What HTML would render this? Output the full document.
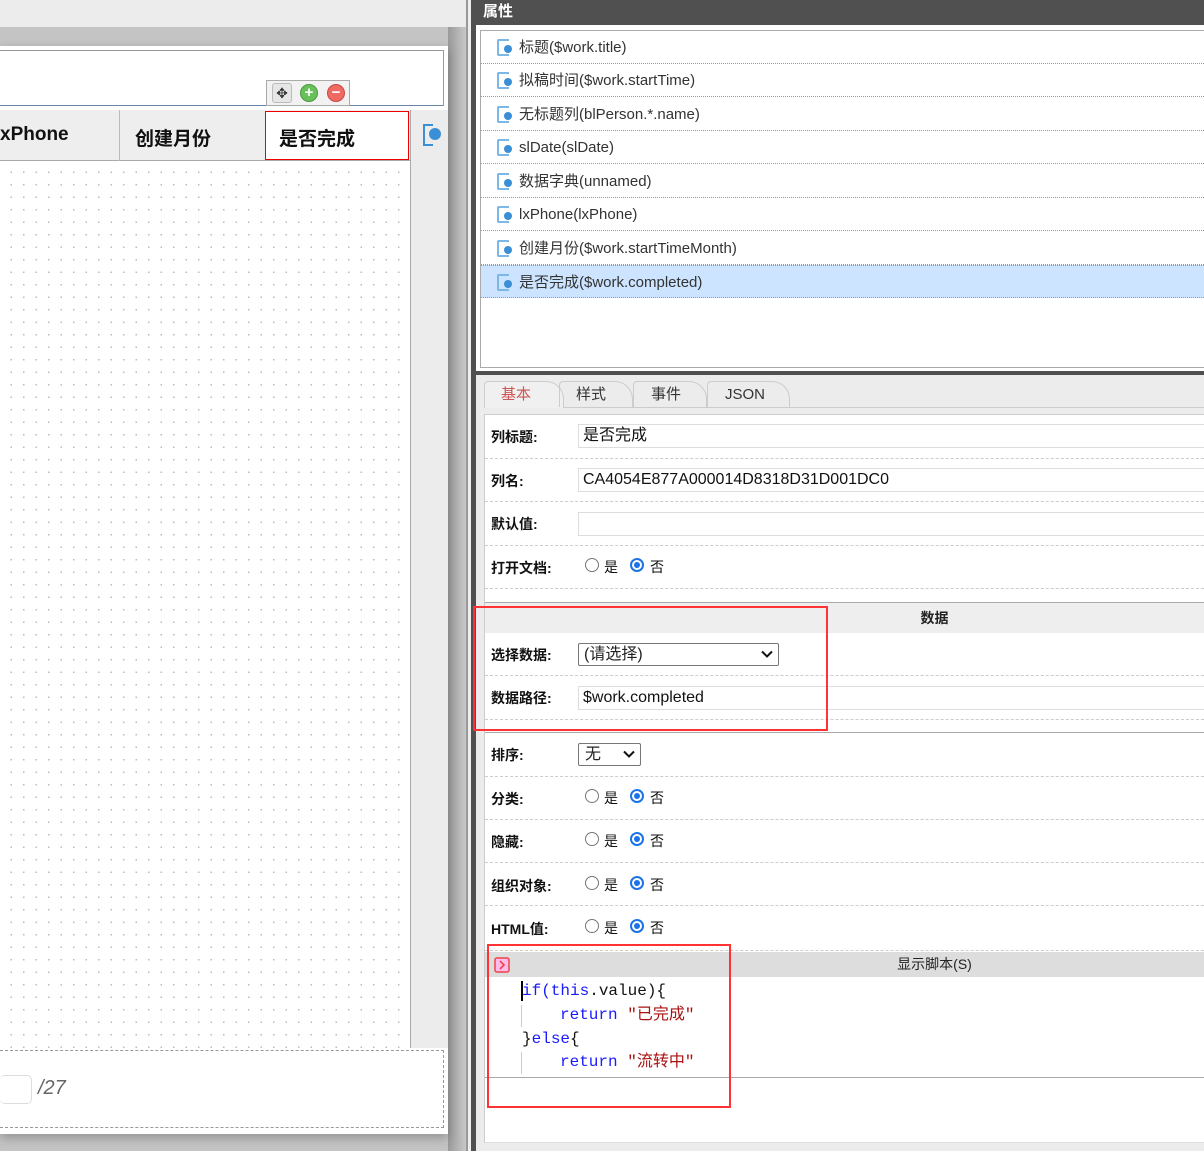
<!DOCTYPE html>
<html><head><meta charset="utf-8"><style>
*{margin:0;padding:0;box-sizing:border-box}
body{width:1204px;height:1151px;position:relative;overflow:hidden;background:#ececec;font-family:"Liberation Sans","Noto Sans CJK SC",sans-serif;font-size:15px;color:#222}
.a{position:absolute}
.lbl{position:absolute;left:491px;font-weight:bold;font-size:14px;color:#111}
.dash{position:absolute;left:485px;right:0;border-top:1px dashed #ccc}
.inp{position:absolute;left:578px;right:0;height:24px;border:1px solid #ddd;border-right:none;padding-left:4px;font-size:16px;line-height:22px;color:#111}
.rad{position:absolute;width:14px;height:14px;border-radius:50%;border:1px solid #777;background:#fff}
.rad.on{border:2px solid #1a73e8}
.rad.on::after{content:"";position:absolute;left:2px;top:2px;width:6px;height:6px;border-radius:50%;background:#1a73e8}
.rt{position:absolute;font-size:14px;color:#111}
.li{position:absolute;left:481px;right:0;height:33px;border-bottom:1px dotted #999;font-size:15px;color:#333;line-height:33px;padding-left:38px}
.ic{position:absolute;left:16px;top:8px;width:12px;height:17px;border:2px solid #7bb8e8;border-right:none;border-radius:2px 0 0 2px}
.ic::after{content:"";position:absolute;left:5px;top:4px;width:8px;height:8px;border-radius:50%;background:#3b8fd6}
.code{position:absolute;font-family:"Liberation Mono","Noto Sans CJK SC",monospace;font-size:16px;line-height:20px;color:#111}
.kw{color:#1a1aff}.st{color:#a11}
.chev{position:absolute;right:5px;top:6px}
</style></head><body>
<!-- left area -->
<div class="a" style="left:0;top:27px;width:466px;height:1124px;background:#c4c4c4"></div>
<div class="a" style="left:448px;top:27px;width:18px;height:1124px;background:linear-gradient(90deg,#9a9a9a,#c8c8c8)"></div>
<div class="a" style="left:0;top:46px;width:448px;height:1088px;background:#fff;box-shadow:0 4px 10px rgba(0,0,0,.25)"></div>
<div class="a" style="left:0;top:50px;width:444px;height:56px;border:1px solid #999;border-left:none;border-bottom:1px solid #6a86a8"></div>
<div class="a" style="left:266px;top:80px;width:84px;height:26px;background:#f2f2f2;border:1px solid #aaa"></div>
<div class="a" style="left:272px;top:83px;width:20px;height:20px;border-radius:3px;background:#e6e6e6;border:1px solid #bbb;text-align:center;line-height:18px;font-size:14px;color:#333">✥</div>
<div class="a" style="left:300px;top:84px;width:18px;height:18px;border-radius:50%;background:#67c05a;border:1px solid #4a9a3e;color:#fff;text-align:center;line-height:15px;font-weight:bold;font-size:15px">+</div>
<div class="a" style="left:327px;top:84px;width:18px;height:18px;border-radius:50%;background:#ef6a63;border:1px solid #c84a44;color:#fff;text-align:center;line-height:15px;font-weight:bold;font-size:15px">−</div>
<div class="a" style="left:0;top:110px;width:447px;height:51px;background:#eee;border-bottom:1px solid #aaa"></div>
<div class="a" style="left:119px;top:110px;width:1px;height:51px;background:#bbb"></div>
<div class="a" style="left:0;top:124px;font-weight:bold;font-size:19px;color:#111">xPhone</div>
<div class="a" style="left:135px;top:124px;font-weight:bold;font-size:19px;color:#111">创建月份</div>
<div class="a" style="left:265px;top:111px;width:144px;height:49px;background:#fff;border:1px solid #e00"></div>
<div class="a" style="left:279px;top:124px;font-weight:bold;font-size:19px;color:#111">是否完成</div>
<div class="a" style="left:410px;top:110px;width:1px;height:938px;background:#aaa"></div>
<div class="a" style="left:411px;top:110px;width:37px;height:938px;background:#ececec"></div>
<div class="a" style="left:423px;top:124px;width:10px;height:22px;border:2px solid #3b8fd6;border-right:none"></div>
<div class="a" style="left:429px;top:128px;width:12px;height:12px;border-radius:50%;background:#3b8fd6"></div>
<div class="a" style="left:0;top:162px;width:409px;height:886px;background-image:radial-gradient(#bbb 0.8px,transparent 1px);background-size:12.5px 12.5px;background-position:5px 4px"></div>
<div class="a" style="left:0;top:1050px;width:444px;height:78px;border:1px dashed #999;border-left:none"></div>
<div class="a" style="left:0;top:1075px;width:32px;height:29px;border:1px solid #ddd;border-radius:5px;border-left:none"></div>
<div class="a" style="left:38px;top:1077px;font-size:20px;font-style:italic;color:#666">/27</div>
<!-- divider -->
<div class="a" style="left:466px;top:0;width:2px;height:1151px;background:#999"></div>
<div class="a" style="left:468px;top:0;width:3px;height:1151px;background:#eee"></div>
<div class="a" style="left:471px;top:0;width:5px;height:1151px;background:#505050"></div>
<!-- right header -->
<div class="a" style="left:471px;top:0;right:0;height:25px;background:#505050"></div>
<div class="a" style="left:483px;top:0;color:#fff;font-weight:bold;font-size:15px">属性</div>
<div class="a" style="left:476px;top:25px;right:0;height:346px;background:#fff"></div>
<div class="a" style="left:480px;top:30px;right:0;height:338px;border:1px solid #aaa;border-right:none"></div>
<div class="li" style="top:31px"><i class="ic"></i>标题($work.title)</div>
<div class="li" style="top:64px"><i class="ic"></i>拟稿时间($work.startTime)</div>
<div class="li" style="top:98px"><i class="ic"></i>无标题列(blPerson.*.name)</div>
<div class="li" style="top:131px"><i class="ic"></i>slDate(slDate)</div>
<div class="li" style="top:165px"><i class="ic"></i>数据字典(unnamed)</div>
<div class="li" style="top:198px"><i class="ic"></i>lxPhone(lxPhone)</div>
<div class="li" style="top:232px"><i class="ic"></i>创建月份($work.startTimeMonth)</div>
<div class="li" style="top:265px;background:#cce4ff;border-top:1px dotted #999"><i class="ic"></i>是否完成($work.completed)</div>
<div class="a" style="left:476px;top:371px;right:0;height:4px;background:#505050"></div>
<!-- tabs -->
<div class="a" style="left:484px;top:407px;right:0;height:1px;background:#ccc"></div>
<div class="a" style="left:484px;top:381px;width:80px;height:27px;background:#f0f0f0;border:1px solid #ccc;border-bottom:none;border-radius:4px 18px 0 0;color:#c55;padding-left:16px;line-height:26px;font-size:15px">基本</div>
<div class="a" style="left:559px;top:381px;width:74px;height:26px;border:1px solid #ccc;border-bottom:none;border-radius:4px 18px 0 0;color:#333;padding-left:16px;line-height:26px">样式</div>
<div class="a" style="left:633px;top:381px;width:74px;height:26px;border:1px solid #ccc;border-bottom:none;border-radius:4px 18px 0 0;color:#333;padding-left:17px;line-height:26px">事件</div>
<div class="a" style="left:707px;top:381px;width:83px;height:26px;border:1px solid #ccc;border-bottom:none;border-radius:4px 18px 0 0;color:#333;padding-left:17px;line-height:26px">JSON</div>
<!-- form -->
<div class="a" style="left:484px;top:414px;right:0;height:729px;background:#fff;border:1px solid #ccc;border-right:none;border-bottom:1px solid #ddd"></div>
<div class="lbl" style="top:427px">列标题:</div><div class="inp" style="top:424px">是否完成</div>
<div class="dash" style="top:458px"></div>
<div class="lbl" style="top:471px">列名:</div><div class="inp" style="top:468px">CA4054E877A000014D8318D31D001DC0</div>
<div class="dash" style="top:501px"></div>
<div class="lbl" style="top:514px">默认值:</div><div class="inp" style="top:512px"></div>
<div class="dash" style="top:545px"></div>
<div class="lbl" style="top:558px">打开文档:</div>
<div class="rad" style="left:585px;top:558px"></div><div class="rt" style="left:604px;top:557px">是</div>
<div class="rad on" style="left:630px;top:558px"></div><div class="rt" style="left:650px;top:557px">否</div>
<div class="dash" style="top:588px"></div>
<div class="a" style="left:485px;top:602px;right:0;height:1px;background:#aaa"></div>
<div class="a" style="left:485px;top:603px;right:0;height:30px;background:#eee;text-align:center;font-weight:bold;font-size:14px;line-height:30px;padding-left:180px">数据</div>
<div class="lbl" style="top:645px">选择数据:</div>
<div class="a" style="left:578px;top:643px;width:201px;height:23px;border:1px solid #777;border-radius:2px;font-size:16px;line-height:21px;padding-left:5px">(请选择)<svg class="chev" width="12" height="8" viewBox="0 0 12 8"><path d="M1 1.5L6 6.5L11 1.5" fill="none" stroke="#111" stroke-width="2"/></svg></div>
<div class="dash" style="top:675px"></div>
<div class="lbl" style="top:688px">数据路径:</div><div class="inp" style="top:686px">$work.completed</div>
<div class="dash" style="top:719px"></div>
<div class="a" style="left:485px;top:732px;right:0;height:1px;background:#aaa"></div>
<div class="lbl" style="top:745px">排序:</div>
<div class="a" style="left:578px;top:743px;width:63px;height:23px;border:1px solid #777;border-radius:2px;font-size:16px;line-height:21px;padding-left:6px">无<svg class="chev" width="12" height="8" viewBox="0 0 12 8"><path d="M1 1.5L6 6.5L11 1.5" fill="none" stroke="#111" stroke-width="2"/></svg></div>
<div class="dash" style="top:776px"></div>
<div class="lbl" style="top:789px">分类:</div>
<div class="rad" style="left:585px;top:789px"></div><div class="rt" style="left:604px;top:788px">是</div>
<div class="rad on" style="left:630px;top:789px"></div><div class="rt" style="left:650px;top:788px">否</div>
<div class="dash" style="top:819px"></div>
<div class="lbl" style="top:832px">隐藏:</div>
<div class="rad" style="left:585px;top:832px"></div><div class="rt" style="left:604px;top:831px">是</div>
<div class="rad on" style="left:630px;top:832px"></div><div class="rt" style="left:650px;top:831px">否</div>
<div class="dash" style="top:862px"></div>
<div class="lbl" style="top:876px">组织对象:</div>
<div class="rad" style="left:585px;top:876px"></div><div class="rt" style="left:604px;top:875px">是</div>
<div class="rad on" style="left:630px;top:876px"></div><div class="rt" style="left:650px;top:875px">否</div>
<div class="dash" style="top:905px"></div>
<div class="lbl" style="top:919px">HTML值:</div>
<div class="rad" style="left:585px;top:919px"></div><div class="rt" style="left:604px;top:918px">是</div>
<div class="rad on" style="left:630px;top:919px"></div><div class="rt" style="left:650px;top:918px">否</div>
<div class="dash" style="top:950px"></div>
<div class="a" style="left:485px;top:952px;right:0;height:25px;background:#ddd;text-align:center;font-size:14px;line-height:25px;padding-left:180px">显示脚本(S)</div>
<svg class="a" style="left:494px;top:957px" width="16" height="16" viewBox="0 0 16 16"><rect x="1" y="1" width="14" height="14" rx="2" fill="#fbe" stroke="#e44" stroke-width="1.5"/><path d="M6 4L10 8L6 12" fill="none" stroke="#e44" stroke-width="1.6"/></svg>
<div class="a" style="left:521px;top:981px;width:2px;height:20px;background:#000"></div>
<div class="a" style="left:521px;top:1005px;width:1px;height:22px;background:#ccc"></div>
<div class="a" style="left:521px;top:1052px;width:1px;height:22px;background:#ccc"></div>
<div class="code" style="left:522px;top:981px"><span class="kw">if(this</span>.value){</div>
<div class="code" style="left:560px;top:1005px"><span class="kw">return</span> <span class="st">"已完成"</span></div>
<div class="code" style="left:522px;top:1029px">}<span class="kw">else</span>{</div>
<div class="code" style="left:560px;top:1052px"><span class="kw">return</span> <span class="st">"流转中"</span></div>
<div class="a" style="left:485px;top:1077px;right:0;height:1px;background:#aaa"></div>
<!-- red boxes -->
<div class="a" style="left:473px;top:606px;width:355px;height:125px;border:2px solid #f33"></div>
<div class="a" style="left:487px;top:944px;width:244px;height:164px;border:2px solid #f33"></div>
</body></html>
